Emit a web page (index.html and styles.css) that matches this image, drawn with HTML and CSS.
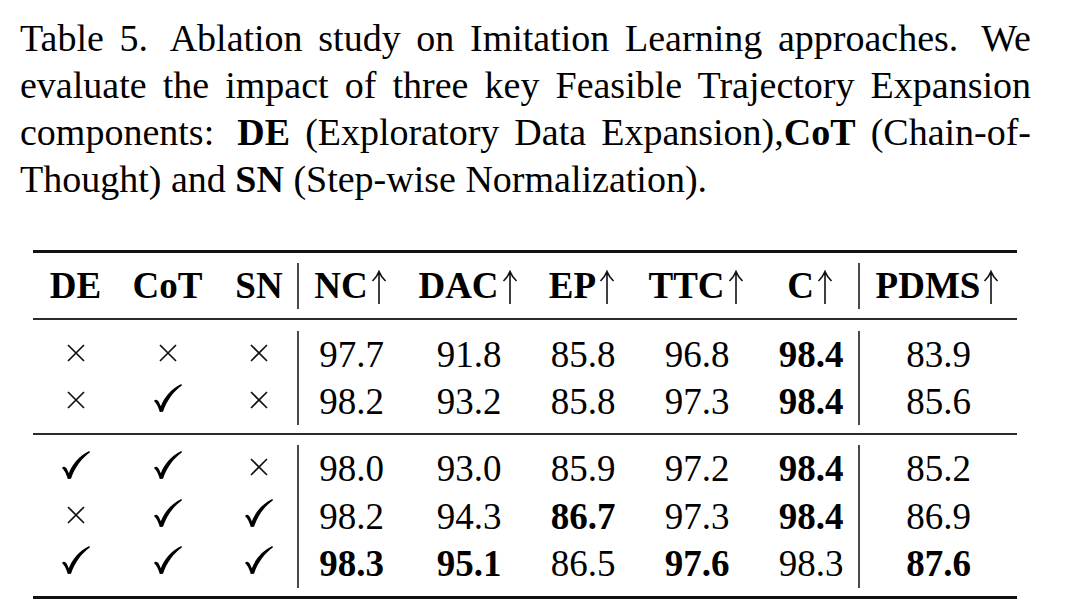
FILE: index.html
```html
<!DOCTYPE html>
<html lang="en">
<head>
<meta charset="utf-8">
<title>Table 5</title>
<link rel="stylesheet" href="styles.css">
</head>
<body>
<div class="page">
  <p class="caption">
    <span class="line">Table 5.<span class="sp"></span> Ablation study on Imitation Learning approaches.<span class="sp"></span> We</span>
    <span class="line">evaluate the impact of three key Feasible Trajectory Expansion</span>
    <span class="line">components:<span class="sp"></span> <b>DE</b> (Exploratory Data Expansion),<b>CoT</b> (Chain-of-</span>
    <span class="line last">Thought) and <b>SN</b> (Step-wise Normalization).</span>
  </p>

  <div class="table">
    <div class="rule thick"></div>
    <div class="sec head">
      <div class="row">
        <div class="c">DE</div>
        <div class="c">CoT</div>
        <div class="c sn">SN</div>
        <div class="c vl">NC<svg class="ar" viewBox="0 0 16 34" aria-label="higher is better"><path d="M8 3V34M1.5 11C4.5 8 6.5 5.5 8 1.5C9.5 5.5 11.5 8 14.5 11"/></svg></div>
        <div class="c">DAC<svg class="ar" viewBox="0 0 16 34" aria-label="higher is better"><path d="M8 3V34M1.5 11C4.5 8 6.5 5.5 8 1.5C9.5 5.5 11.5 8 14.5 11"/></svg></div>
        <div class="c">EP<svg class="ar" viewBox="0 0 16 34" aria-label="higher is better"><path d="M8 3V34M1.5 11C4.5 8 6.5 5.5 8 1.5C9.5 5.5 11.5 8 14.5 11"/></svg></div>
        <div class="c">TTC<svg class="ar" viewBox="0 0 16 34" aria-label="higher is better"><path d="M8 3V34M1.5 11C4.5 8 6.5 5.5 8 1.5C9.5 5.5 11.5 8 14.5 11"/></svg></div>
        <div class="c cc">C<svg class="ar" viewBox="0 0 16 34" aria-label="higher is better"><path d="M8 3V34M1.5 11C4.5 8 6.5 5.5 8 1.5C9.5 5.5 11.5 8 14.5 11"/></svg></div>
        <div class="c vl">PDMS<svg class="ar" viewBox="0 0 16 34" aria-label="higher is better"><path d="M8 3V34M1.5 11C4.5 8 6.5 5.5 8 1.5C9.5 5.5 11.5 8 14.5 11"/></svg></div>
      </div>
    </div>
    <div class="rule thin"></div>
    <div class="sec g1">
      <div class="row">
        <div class="c"><svg class="x" viewBox="0 0 18 18" aria-label="no"><path d="M1 1L17 17M17 1L1 17"/></svg></div>
        <div class="c"><svg class="x" viewBox="0 0 18 18" aria-label="no"><path d="M1 1L17 17M17 1L1 17"/></svg></div>
        <div class="c sn"><svg class="x" viewBox="0 0 18 18" aria-label="no"><path d="M1 1L17 17M17 1L1 17"/></svg></div>
        <div class="c vl">97.7</div>
        <div class="c">91.8</div>
        <div class="c">85.8</div>
        <div class="c">96.8</div>
        <div class="c cc"><b>98.4</b></div>
        <div class="c vl">83.9</div>
      </div>
      <div class="row">
        <div class="c"><svg class="x" viewBox="0 0 18 18" aria-label="no"><path d="M1 1L17 17M17 1L1 17"/></svg></div>
        <div class="c"><svg class="ck" viewBox="0 0 28 28" aria-label="yes"><path d="M0 17C1.5 15 3.8 15.6 5 18.3L6.8 22.2C10.5 13 17 5 27.3 0L28 1.2C19.5 7.5 13 16 9 27.8L5.8 28C4.5 23.5 2.5 19 0 17Z"/></svg></div>
        <div class="c sn"><svg class="x" viewBox="0 0 18 18" aria-label="no"><path d="M1 1L17 17M17 1L1 17"/></svg></div>
        <div class="c vl">98.2</div>
        <div class="c">93.2</div>
        <div class="c">85.8</div>
        <div class="c">97.3</div>
        <div class="c cc"><b>98.4</b></div>
        <div class="c vl">85.6</div>
      </div>
    </div>
    <div class="rule thin"></div>
    <div class="sec g2">
      <div class="row">
        <div class="c"><svg class="ck" viewBox="0 0 28 28" aria-label="yes"><path d="M0 17C1.5 15 3.8 15.6 5 18.3L6.8 22.2C10.5 13 17 5 27.3 0L28 1.2C19.5 7.5 13 16 9 27.8L5.8 28C4.5 23.5 2.5 19 0 17Z"/></svg></div>
        <div class="c"><svg class="ck" viewBox="0 0 28 28" aria-label="yes"><path d="M0 17C1.5 15 3.8 15.6 5 18.3L6.8 22.2C10.5 13 17 5 27.3 0L28 1.2C19.5 7.5 13 16 9 27.8L5.8 28C4.5 23.5 2.5 19 0 17Z"/></svg></div>
        <div class="c sn"><svg class="x" viewBox="0 0 18 18" aria-label="no"><path d="M1 1L17 17M17 1L1 17"/></svg></div>
        <div class="c vl">98.0</div>
        <div class="c">93.0</div>
        <div class="c">85.9</div>
        <div class="c">97.2</div>
        <div class="c cc"><b>98.4</b></div>
        <div class="c vl">85.2</div>
      </div>
      <div class="row">
        <div class="c"><svg class="x" viewBox="0 0 18 18" aria-label="no"><path d="M1 1L17 17M17 1L1 17"/></svg></div>
        <div class="c"><svg class="ck" viewBox="0 0 28 28" aria-label="yes"><path d="M0 17C1.5 15 3.8 15.6 5 18.3L6.8 22.2C10.5 13 17 5 27.3 0L28 1.2C19.5 7.5 13 16 9 27.8L5.8 28C4.5 23.5 2.5 19 0 17Z"/></svg></div>
        <div class="c sn"><svg class="ck" viewBox="0 0 28 28" aria-label="yes"><path d="M0 17C1.5 15 3.8 15.6 5 18.3L6.8 22.2C10.5 13 17 5 27.3 0L28 1.2C19.5 7.5 13 16 9 27.8L5.8 28C4.5 23.5 2.5 19 0 17Z"/></svg></div>
        <div class="c vl">98.2</div>
        <div class="c">94.3</div>
        <div class="c"><b>86.7</b></div>
        <div class="c">97.3</div>
        <div class="c cc"><b>98.4</b></div>
        <div class="c vl">86.9</div>
      </div>
      <div class="row">
        <div class="c"><svg class="ck" viewBox="0 0 28 28" aria-label="yes"><path d="M0 17C1.5 15 3.8 15.6 5 18.3L6.8 22.2C10.5 13 17 5 27.3 0L28 1.2C19.5 7.5 13 16 9 27.8L5.8 28C4.5 23.5 2.5 19 0 17Z"/></svg></div>
        <div class="c"><svg class="ck" viewBox="0 0 28 28" aria-label="yes"><path d="M0 17C1.5 15 3.8 15.6 5 18.3L6.8 22.2C10.5 13 17 5 27.3 0L28 1.2C19.5 7.5 13 16 9 27.8L5.8 28C4.5 23.5 2.5 19 0 17Z"/></svg></div>
        <div class="c sn"><svg class="ck" viewBox="0 0 28 28" aria-label="yes"><path d="M0 17C1.5 15 3.8 15.6 5 18.3L6.8 22.2C10.5 13 17 5 27.3 0L28 1.2C19.5 7.5 13 16 9 27.8L5.8 28C4.5 23.5 2.5 19 0 17Z"/></svg></div>
        <div class="c vl"><b>98.3</b></div>
        <div class="c"><b>95.1</b></div>
        <div class="c">86.5</div>
        <div class="c"><b>97.6</b></div>
        <div class="c cc">98.3</div>
        <div class="c vl"><b>87.6</b></div>
      </div>
    </div>
    <div class="rule thick"></div>
  </div>
</div>
</body>
</html>
```

FILE: styles.css
```css
html, body {
  margin: 0;
  padding: 0;
  background: #ffffff;
}

body {
  color: #000000;
  font-family: "Liberation Serif", "Times New Roman", serif;
}

.page {
  padding: 15px 49px 0 20px;
}

.caption {
  margin: 0;
  font-size: 38px;
  line-height: 47px;
}

.caption .line {
  display: block;
  text-align: justify;
  text-align-last: justify;
}

.caption .line.last {
  text-align-last: left;
}

.caption .sp {
  display: inline-block;
  width: 8px;
}

.table {
  margin: 47px 0 0 13px;
  width: 984px;
}

.rule.thick {
  height: 3px;
  background: #111111;
}

.rule.thin {
  height: 2px;
  background: #2b2b2b;
}

.sec.head {
  padding: 10px 0 9px;
}

.sec.head .row {
  font-weight: bold;
  line-height: 46px;
}

.sec.g1 {
  padding: 11px 0 8px;
}

.sec.g2 {
  padding: 10px 0 8px;
}

.sec.g2 .row {
  line-height: 47.67px;
}

.row {
  display: grid;
  grid-template-columns: 85px 99px 80px 107px 130px 98px 130px 96px 159px;
  font-size: 37px;
  line-height: 47px;
  text-align: center;
}

.c {
  white-space: nowrap;
}

.c.sn {
  padding-left: 4px;
}

.c.vl {
  border-left: 2px solid #4a4a4a;
}

.c.cc {
  padding-left: 2px;
}

.ar {
  width: 16px;
  height: 34px;
  margin: 0 2px 0 3px;
  vertical-align: -6px;
  fill: none;
  stroke: #111111;
  stroke-width: 1.6px;
}

.x {
  width: 18px;
  height: 18px;
  vertical-align: 5px;
  fill: none;
  stroke: #111111;
  stroke-width: 1.7px;
}

.ck {
  width: 28px;
  height: 28px;
  vertical-align: 2px;
  fill: #000000;
}
```
